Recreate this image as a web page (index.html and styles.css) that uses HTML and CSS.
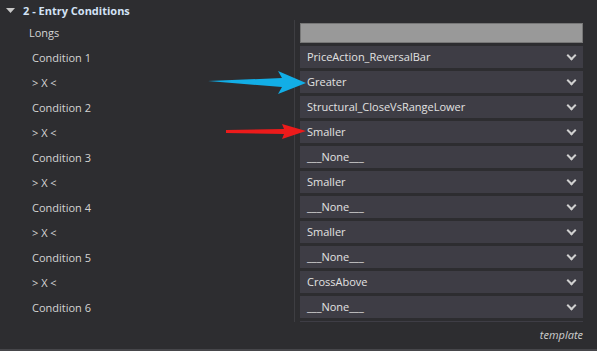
FILE: index.html
```html
<!DOCTYPE html>
<html lang="en">
<head>
    <meta charset="UTF-8">
    <title>Entry Conditions</title>
    <link rel="stylesheet" href="styles.css">
</head>
<body>
    <div class="panel">
        <div class="section-header">
            <svg class="caret" width="9" height="5" viewBox="0 0 9 5"><polygon points="0,0 9,0 4.5,5" fill="#c8c8c8"/></svg>
            <span class="section-title">2 - Entry Conditions</span>
        </div>

        <div class="props">
            <div class="label longs">Longs</div>
            <div class="value"><div class="readonly-box"></div></div>

            <div class="label">Condition 1</div>
            <div class="value"><div class="combo">PriceAction_ReversalBar</div></div>
            <div class="label">&gt; X &lt;</div>
            <div class="value"><div class="combo">Greater</div></div>

            <div class="label">Condition 2</div>
            <div class="value"><div class="combo">Structural_CloseVsRangeLower</div></div>
            <div class="label">&gt; X &lt;</div>
            <div class="value"><div class="combo">Smaller</div></div>

            <div class="label">Condition 3</div>
            <div class="value"><div class="combo">___None___</div></div>
            <div class="label">&gt; X &lt;</div>
            <div class="value"><div class="combo">Smaller</div></div>

            <div class="label">Condition 4</div>
            <div class="value"><div class="combo">___None___</div></div>
            <div class="label">&gt; X &lt;</div>
            <div class="value"><div class="combo">Smaller</div></div>

            <div class="label">Condition 5</div>
            <div class="value"><div class="combo">___None___</div></div>
            <div class="label">&gt; X &lt;</div>
            <div class="value"><div class="combo">CrossAbove</div></div>

            <div class="label">Condition 6</div>
            <div class="value"><div class="combo">___None___</div></div>
            <!-- next row, scrolled out of view -->
            <div class="label"></div>
            <div class="value"><div class="combo empty"></div></div>
        </div>

        <div class="footer">template</div>

        <!-- annotation arrows -->
        <svg class="arrow arrow-blue" width="100" height="24" viewBox="0 0 100 24">
            <polygon points="0,10 74,7 70,0 98,12 70,23 74,16" fill="#12aee6"/>
        </svg>
        <svg class="arrow arrow-red" width="82" height="16" viewBox="0 0 82 16">
            <polygon points="0,6 58,5 56,0 80,7 56,15 58,10 0,9" fill="#ec1b1b"/>
        </svg>
    </div>
</body>
</html>
```

FILE: styles.css
```css
body {
    margin: 0;
    background-color: #2d2d30;
    font-family: "Open Sans", "Noto Sans", sans-serif;
    font-size: 11px;
    color: #d4d4d4;
}
.panel {
    position: relative;
    width: 597px;
    height: 351px;
    overflow: hidden;
    border-bottom: 2px solid #46464a;
    box-sizing: border-box;
}
.section-header {
    height: 20px;
    display: flex;
    align-items: center;
    padding-left: 6px;
}
.caret {
    margin-right: 8px;
}
.section-title {
    font-weight: bold;
    font-size: 11px;
    color: #d3e2f6;
}
.props {
    display: grid;
    grid-template-columns: 295px 1fr;
    grid-auto-rows: 25px;
    height: 302px;
    overflow: hidden;
}
.label {
    display: flex;
    align-items: center;
    padding-left: 32px;
    border-right: 1px solid #3e3e42;
    white-space: nowrap;
}
.label.longs {
    padding-left: 29px;
}
.value {
    padding: 1px 14px 0 5px;
}
.readonly-box {
    margin-top: 2px;
    height: 18px;
    background-color: #999999;
    border: 1px solid #777777;
}
.combo {
    position: relative;
    height: 22px;
    line-height: 21px;
    padding-left: 7px;
    background-color: #3e3d45;
    color: #e2e2e2;
}
.combo::after {
    content: "";
    position: absolute;
    right: 8px;
    top: 6px;
    width: 5px;
    height: 5px;
    border-right: 2px solid #d0d0d0;
    border-bottom: 2px solid #d0d0d0;
    transform: rotate(45deg);
}
.combo.empty::after {
    display: none;
}
.footer {
    height: 25px;
    display: flex;
    align-items: center;
    justify-content: flex-end;
    padding-right: 14px;
    font-style: italic;
    color: #cfcfcf;
}
.arrow {
    position: absolute;
}
.arrow-blue {
    left: 208px;
    top: 71px;
}
.arrow-red {
    left: 226px;
    top: 124px;
}
```
